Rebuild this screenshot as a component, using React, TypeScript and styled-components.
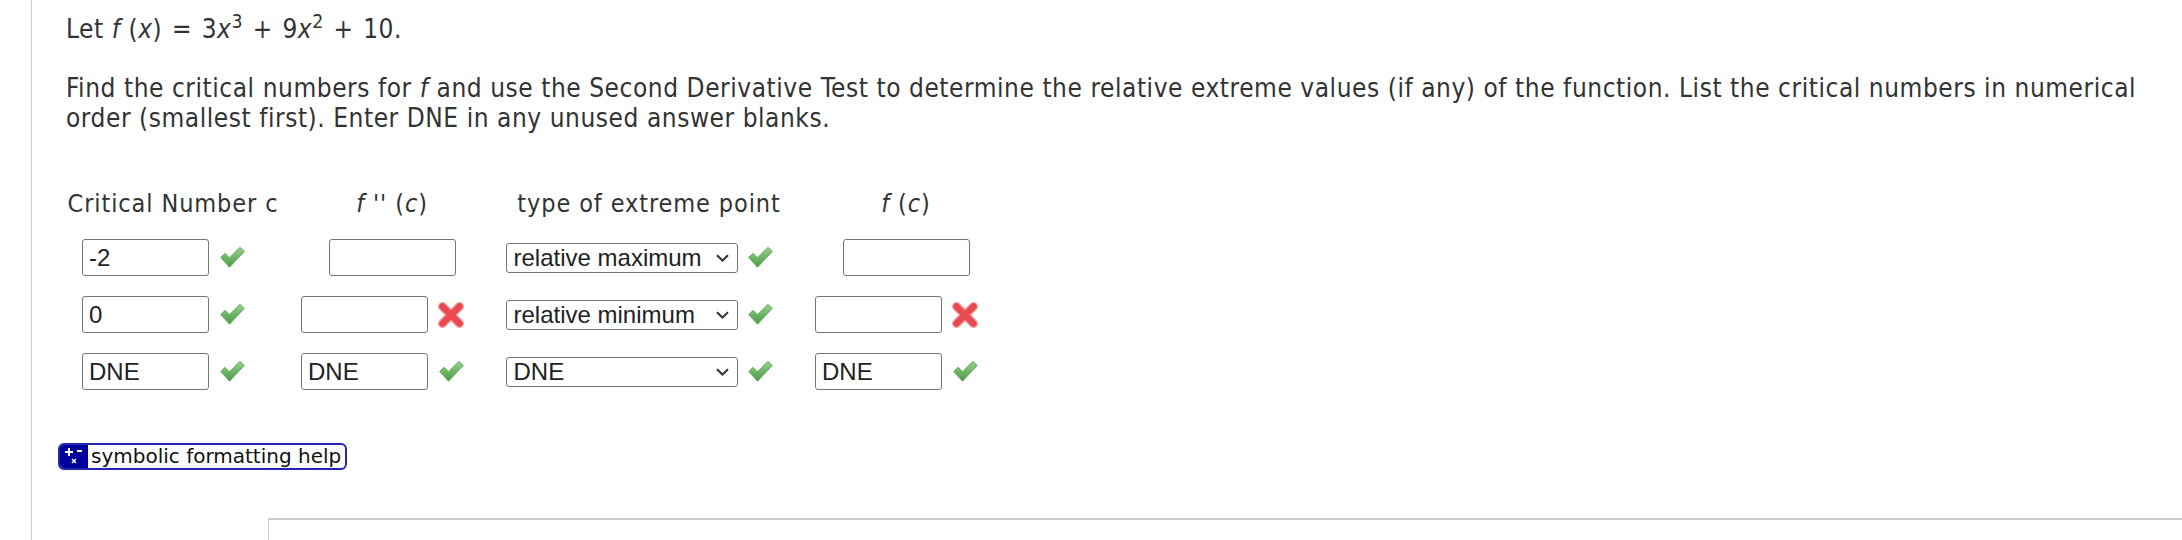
import React from "react";
import styled, { createGlobalStyle } from "styled-components";

const GlobalStyle = createGlobalStyle`
  html, body { margin: 0; padding: 0; background: #ffffff; }
  body {
    font-family: "DejaVu Sans Condensed", "DejaVu Sans", sans-serif;
    color: #333333;
  }
`;

const Page = styled.div`
  display: flex;
  height: 540px;
  overflow: hidden;
`;

const Gutter = styled.div`
  width: 31px;
  flex: none;
`;

const Main = styled.main`
  flex: 1;
  min-width: 0;
  border-left: 1px solid #d2d2d2;
  padding-left: 34px;
  display: flex;
  flex-direction: column;
  align-items: flex-start;
`;

const Statement = styled.p`
  margin: 14px 0 0;
  font-size: 26px;
  letter-spacing: 0.55px;
  line-height: 30px;
  white-space: nowrap;
`;

const Prompt = styled.p`
  margin: 29px 0 0;
  font-size: 26px;
  letter-spacing: 0.55px;
  line-height: 30px;
  white-space: nowrap;
`;

const Var = styled.i`
  font-style: italic;
`;

const Op = styled.span`
  padding: 0 0.37em;
`;

const Sup = styled.sup`
  font-size: 0.74em;
  line-height: 0;
  vertical-align: 0.5em;
`;

const AnswerGrid = styled.div`
  margin-top: 56px;
  display: grid;
  grid-template-columns: 214px 182px 290px 182px;
  column-gap: 21px;
  row-gap: 20px;
  justify-items: center;
  align-items: center;
`;

const Head = styled.div`
  font-size: 25px;
  letter-spacing: 0.9px;
  line-height: 30px;
  white-space: nowrap;
`;

const Cell = styled.div`
  display: flex;
  align-items: center;
`;

const Field = styled.input`
  box-sizing: border-box;
  width: 127px;
  height: 37px;
  border: 1px solid #767676;
  border-radius: 3px;
  padding: 0 6px;
  font-family: "Liberation Sans", Arial, sans-serif;
  font-size: 24px;
  color: #222222;
  background: #ffffff;
  outline: none;
`;

const SelectWrap = styled.div`
  position: relative;
  width: 232px;
  height: 30px;
`;

const Select = styled.select`
  box-sizing: border-box;
  width: 100%;
  height: 100%;
  appearance: none;
  -webkit-appearance: none;
  border: 1px solid #767676;
  border-radius: 3px;
  padding: 0 0 0 7px;
  font-family: "Liberation Sans", Arial, sans-serif;
  font-size: 24px;
  color: #222222;
  background: #ffffff;
  outline: none;
`;

const Chevron = styled.svg`
  position: absolute;
  right: 9px;
  top: 11px;
  pointer-events: none;
`;

const MarkBox = styled.span`
  display: inline-flex;
  width: 28px;
  margin-left: 9px;
  margin-right: 18px;
  justify-content: center;
  align-items: center;
`;

const HelpButton = styled.button`
  margin-top: 53px;
  margin-left: -8px;
  display: inline-flex;
  align-items: stretch;
  height: 27px;
  padding: 0;
  border: 2px solid #2424b0;
  border-radius: 6px;
  background: #ffffff;
  overflow: hidden;
  cursor: pointer;
`;

const HelpIcon = styled.span`
  width: 28px;
  background: #00009c;
  display: flex;
  align-items: center;
  justify-content: center;
`;

const HelpText = styled.span`
  font-family: "DejaVu Sans", sans-serif;
  font-size: 20px;
  line-height: 23px;
  color: #111111;
  padding: 0 4px 0 3px;
`;

const BottomPanel = styled.div`
  margin-top: 48px;
  margin-left: 202px;
  align-self: stretch;
  flex: 1;
  border-top: 2px solid #cccccc;
  border-left: 1px solid #cccccc;
`;

function Check() {
  return (
    <svg width="25" height="23" viewBox="0 0 25 23">
      <defs>
        <linearGradient id="gchk" x1="0" y1="0" x2="0" y2="1">
          <stop offset="0" stopColor="#96d48b" />
          <stop offset="1" stopColor="#4a9946" />
        </linearGradient>
      </defs>
      <polygon
        points="0.8,11.5 5,7.3 9.5,11.8 20,1.3 24.2,5.5 9.5,21.2"
        fill="url(#gchk)"
        stroke="#62a95d"
        strokeWidth="1"
        strokeLinejoin="round"
      />
    </svg>
  );
}

function Cross() {
  return (
    <svg width="26" height="26" viewBox="0 0 26 26">
      <g strokeLinecap="round">
        <line x1="4.5" y1="4.5" x2="21.5" y2="21.5" stroke="#f4a3a3" strokeWidth="9" />
        <line x1="21.5" y1="4.5" x2="4.5" y2="21.5" stroke="#f4a3a3" strokeWidth="9" />
        <line x1="4.5" y1="4.5" x2="21.5" y2="21.5" stroke="#e84a50" strokeWidth="6.5" />
        <line x1="21.5" y1="4.5" x2="4.5" y2="21.5" stroke="#e84a50" strokeWidth="6.5" />
      </g>
    </svg>
  );
}

function Mark({ ok }: { ok: boolean }) {
  return <MarkBox>{ok ? <Check /> : <Cross />}</MarkBox>;
}

function TextAnswer({ value, mark }: { value: string; mark?: boolean }) {
  return (
    <Cell>
      <Field readOnly value={value} />
      {mark !== undefined && <Mark ok={mark} />}
    </Cell>
  );
}

function ChoiceAnswer({ value }: { value: string }) {
  return (
    <Cell>
      <SelectWrap>
        <Select defaultValue={value}>
          <option value="relative maximum">relative maximum</option>
          <option value="relative minimum">relative minimum</option>
          <option value="DNE">DNE</option>
        </Select>
        <Chevron width="13" height="8" viewBox="0 0 13 8">
          <polyline points="1,1.2 6.5,6.5 12,1.2" fill="none" stroke="#333" strokeWidth="2" />
        </Chevron>
      </SelectWrap>
      <Mark ok />
    </Cell>
  );
}

export default function App() {
  return (
    <>
      <GlobalStyle />
      <Page>
        <Gutter />
        <Main>
          <Statement>
            Let <Var>f</Var> (<Var>x</Var>)<Op>=</Op>3<Var>x</Var>
            <Sup>3</Sup>
            <Op>+</Op>9<Var>x</Var>
            <Sup>2</Sup>
            <Op>+</Op>10.
          </Statement>
          <Prompt>
            Find the critical numbers for <Var>f</Var> and use the Second Derivative Test to determine the
            relative extreme values (if any) of the function. List the critical numbers in numerical
            <br />
            order (smallest first). Enter DNE in any unused answer blanks.
          </Prompt>
          <AnswerGrid>
            <Head>Critical Number c</Head>
            <Head>
              <Var>f</Var> <Var>''</Var> (<Var>c</Var>)
            </Head>
            <Head>type of extreme point</Head>
            <Head>
              <Var>f</Var> (<Var>c</Var>)
            </Head>

            <TextAnswer value="-2" mark />
            <TextAnswer value="" />
            <ChoiceAnswer value="relative maximum" />
            <TextAnswer value="" />

            <TextAnswer value="0" mark />
            <TextAnswer value="" mark={false} />
            <ChoiceAnswer value="relative minimum" />
            <TextAnswer value="" mark={false} />

            <TextAnswer value="DNE" mark />
            <TextAnswer value="DNE" mark />
            <ChoiceAnswer value="DNE" />
            <TextAnswer value="DNE" mark />
          </AnswerGrid>
          <HelpButton type="button">
            <HelpIcon>
              <svg width="22" height="21" viewBox="0 0 22 21">
                <g stroke="#ffffff" strokeWidth="2">
                  <line x1="2" y1="6" x2="10" y2="6" />
                  <line x1="6" y1="2" x2="6" y2="10" />
                  <line x1="14" y1="5" x2="19" y2="5" />
                </g>
                <g stroke="#ffffff" strokeWidth="1.5">
                  <line x1="9" y1="13" x2="13" y2="17" />
                  <line x1="13" y1="13" x2="9" y2="17" />
                </g>
              </svg>
            </HelpIcon>
            <HelpText>symbolic formatting help</HelpText>
          </HelpButton>
          <BottomPanel />
        </Main>
      </Page>
    </>
  );
}
